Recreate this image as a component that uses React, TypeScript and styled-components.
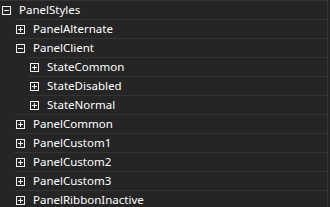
import React, { useState } from "react";
import styled, { createGlobalStyle } from "styled-components";

interface Node {
    label: string;
    children?: Node[];
}

const tree: Node = {
    label: "PanelStyles",
    children: [
        { label: "PanelAlternate", children: [] },
        {
            label: "PanelClient",
            children: [
                { label: "StateCommon", children: [] },
                { label: "StateDisabled", children: [] },
                { label: "StateNormal", children: [] },
            ],
        },
        { label: "PanelCommon", children: [] },
        { label: "PanelCustom1", children: [] },
        { label: "PanelCustom2", children: [] },
        { label: "PanelCustom3", children: [] },
        { label: "PanelRibbonInactive", children: [] },
        { label: "PanelRibbonPanel", children: [] },
    ],
};

const GlobalStyle = createGlobalStyle`
    html, body {
        margin: 0;
        padding: 0;
        background: #252526;
        overflow: hidden;
    }
`;

const Expander = ({ open }: { open: boolean }) => (
    <ExpanderBox>
        <svg width="9" height="9" viewBox="0 0 9 9">
            <rect x="0.5" y="0.5" width="8" height="8" fill="none" stroke="#f2f2f2" strokeWidth="1" />
            <line x1="2" y1="4.5" x2="7" y2="4.5" stroke="#f2f2f2" strokeWidth="1" />
            {!open && <line x1="4.5" y1="2" x2="4.5" y2="7" stroke="#f2f2f2" strokeWidth="1" />}
        </svg>
    </ExpanderBox>
);

const TreeNode = ({ node, level, path }: { node: Node; level: number; path: string }) => {
    const [open, setOpen] = useState<boolean>(path === "PanelStyles" || path === "PanelStyles/PanelClient");

    return (
        <>
            <Row level={level} onClick={() => setOpen(!open)}>
                <Expander open={open} />
                <Label>{node.label}</Label>
            </Row>
            {open && node.children && node.children.map(child => (
                <TreeNode
                    key={child.label}
                    node={child}
                    level={level + 1}
                    path={path + "/" + child.label}
                />
            ))}
        </>
    );
};

export default () => (
    <>
        <GlobalStyle />
        <Panel>
            <TreeNode node={tree} level={0} path={tree.label} />
        </Panel>
    </>
);

const Panel = styled.div`
    width: 327px;
    height: 207px;
    border-right: 1px solid #343434;
    background: #252526;
    overflow: hidden;
    font-family: "Noto Sans", "Open Sans", sans-serif;
    font-size: 11.5px;
    color: #ffffff;
`;

const Row = styled.div<{ level: number }>`
    display       : flex;
    align-items   : center;
    height        : 18px;
    margin-left   : ${props => props.level * 14}px;
    padding-left  : 2px;
    border-top    : 1px solid #343434;
    cursor        : default;
    user-select   : none;
`;

const ExpanderBox = styled.span`
    display: flex;
    width  : 9px;
    height : 9px;
    margin-right: 8px;
`;

const Label = styled.span`
    white-space: nowrap;
    line-height: 18px;
`;
